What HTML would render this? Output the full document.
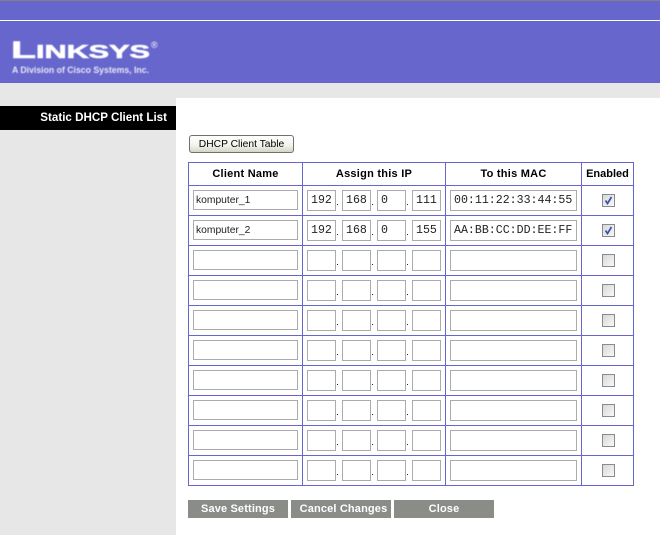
<!DOCTYPE html>
<html><head><meta charset="utf-8"><style>
html,body{margin:0;padding:0;width:660px;height:535px;overflow:hidden;background:#fff}
body{position:relative;font-family:"Liberation Sans",sans-serif;color:#000}
div,span{position:absolute;box-sizing:border-box}
.l{background:#6666cc}
.h{height:1px;left:188px;width:446px}
.v{width:1px;top:162px;height:324px}
.th{top:163px;height:23px;font-size:11px;font-weight:bold;text-align:center;line-height:23px;letter-spacing:.25px}
.row{left:0;width:660px;height:30px}
.i{border:1px solid #ababab;background:#fff;height:21px;top:5px;font-family:"Liberation Mono",monospace;font-size:11.6px;color:#222;line-height:20px;padding-left:3px;white-space:nowrap;overflow:hidden}
.n{left:193px;width:105px;height:20px;font-family:"Liberation Sans",sans-serif;font-size:10.3px;line-height:20px;padding-left:2px}
.a{left:307px;width:29px}.b{left:342px;width:29px}.c{left:377px;width:29px}.d{left:412px;width:29px}
.m{left:450px;width:127px}
.p{width:1px;height:1px;background:#222;top:19px}
.k{left:602px;top:9px;width:13px;height:13px;border:1px solid #868b92;background:linear-gradient(135deg,#d8d8d4,#f8f8f6)}
.k svg{position:absolute;left:1px;top:1px}
.bt{top:500px;width:100px;height:18px;background:#8a8c88;color:#fff;font-size:11px;font-weight:bold;text-align:center;line-height:18px;letter-spacing:.15px}
</style></head><body>
<div style="left:0;top:0;width:660px;height:83px;background:#6666cc"></div>
<div style="left:0;top:0;width:660px;height:1px;background:#808080"></div>
<div style="left:0;top:20px;width:660px;height:1px;background:#fff"></div>
<svg style="position:absolute;left:0;top:30px;filter:blur(.4px)" width="170" height="50">
<text x="11" y="28" fill="#fff" stroke="#fff" stroke-width=".6" font-family="Liberation Sans" font-weight="bold" font-size="18" textLength="139" lengthAdjust="spacingAndGlyphs"><tspan font-size="24">L</tspan>INKSYS</text>
<text x="151" y="18" fill="#fff" font-size="9" font-family="Liberation Sans">®</text>
<text x="12" y="43" fill="#e8e8f8" font-family="Liberation Sans" font-weight="bold" font-size="9" textLength="137" lengthAdjust="spacingAndGlyphs">A Division of Cisco Systems, Inc.</text>
</svg>
<div style="left:0;top:83px;width:660px;height:452px;background:#e7e7e7"></div>
<div style="left:176px;top:98px;width:484px;height:437px;background:#fff"></div>
<div style="left:0;top:106px;width:176px;height:24px;background:#000;color:#fff;font-size:11.6px;font-weight:bold;line-height:24px;text-align:right;padding-right:9px;white-space:nowrap">Static DHCP Client List</div>
<div style="left:189px;top:135px;width:105px;height:18px;border:1px solid #70706a;border-radius:3px;background:linear-gradient(#fff,#f2f2ec 60%,#d6d4c8);font-size:10.3px;line-height:17px;text-align:center">DHCP Client Table</div>

<div class="h l" style="top:162px"></div><div class="h l" style="top:185px"></div><div class="h l" style="top:215px"></div><div class="h l" style="top:245px"></div><div class="h l" style="top:275px"></div><div class="h l" style="top:305px"></div><div class="h l" style="top:335px"></div><div class="h l" style="top:365px"></div><div class="h l" style="top:395px"></div><div class="h l" style="top:425px"></div><div class="h l" style="top:455px"></div><div class="h l" style="top:485px"></div>
<div class="v l" style="left:188px"></div><div class="v l" style="left:302px"></div><div class="v l" style="left:445px"></div><div class="v l" style="left:581px"></div><div class="v l" style="left:633px"></div>
<div class="th" style="left:189px;width:113px">Client Name</div>
<div class="th" style="left:303px;width:142px">Assign this IP</div>
<div class="th" style="left:446px;width:135px">To this MAC</div>
<div class="th" style="left:582px;width:51px;letter-spacing:0">Enabled</div>

<div class="row" style="top:185px"><div class="i n">komputer_1</div><div class="i a">192</div><span class="p" style="left:337px"></span><div class="i b">168</div><span class="p" style="left:372px"></span><div class="i c">0</div><span class="p" style="left:407px"></span><div class="i d">111</div><div class="i m">00:11:22:33:44:55</div><div class="k"><svg width="11" height="11"><path d="M1.5 4.5L3.5 7.5L7.5 1" fill="none" stroke="#3a50b0" stroke-width="1.7"/></svg></div></div>
<div class="row" style="top:215px"><div class="i n">komputer_2</div><div class="i a">192</div><span class="p" style="left:337px"></span><div class="i b">168</div><span class="p" style="left:372px"></span><div class="i c">0</div><span class="p" style="left:407px"></span><div class="i d">155</div><div class="i m">AA:BB:CC:DD:EE:FF</div><div class="k"><svg width="11" height="11"><path d="M1.5 4.5L3.5 7.5L7.5 1" fill="none" stroke="#3a50b0" stroke-width="1.7"/></svg></div></div>
<div class="row" style="top:245px"><div class="i n"></div><div class="i a"></div><span class="p" style="left:337px"></span><div class="i b"></div><span class="p" style="left:372px"></span><div class="i c"></div><span class="p" style="left:407px"></span><div class="i d"></div><div class="i m"></div><div class="k"></div></div>
<div class="row" style="top:275px"><div class="i n"></div><div class="i a"></div><span class="p" style="left:337px"></span><div class="i b"></div><span class="p" style="left:372px"></span><div class="i c"></div><span class="p" style="left:407px"></span><div class="i d"></div><div class="i m"></div><div class="k"></div></div>
<div class="row" style="top:305px"><div class="i n"></div><div class="i a"></div><span class="p" style="left:337px"></span><div class="i b"></div><span class="p" style="left:372px"></span><div class="i c"></div><span class="p" style="left:407px"></span><div class="i d"></div><div class="i m"></div><div class="k"></div></div>
<div class="row" style="top:335px"><div class="i n"></div><div class="i a"></div><span class="p" style="left:337px"></span><div class="i b"></div><span class="p" style="left:372px"></span><div class="i c"></div><span class="p" style="left:407px"></span><div class="i d"></div><div class="i m"></div><div class="k"></div></div>
<div class="row" style="top:365px"><div class="i n"></div><div class="i a"></div><span class="p" style="left:337px"></span><div class="i b"></div><span class="p" style="left:372px"></span><div class="i c"></div><span class="p" style="left:407px"></span><div class="i d"></div><div class="i m"></div><div class="k"></div></div>
<div class="row" style="top:395px"><div class="i n"></div><div class="i a"></div><span class="p" style="left:337px"></span><div class="i b"></div><span class="p" style="left:372px"></span><div class="i c"></div><span class="p" style="left:407px"></span><div class="i d"></div><div class="i m"></div><div class="k"></div></div>
<div class="row" style="top:425px"><div class="i n"></div><div class="i a"></div><span class="p" style="left:337px"></span><div class="i b"></div><span class="p" style="left:372px"></span><div class="i c"></div><span class="p" style="left:407px"></span><div class="i d"></div><div class="i m"></div><div class="k"></div></div>
<div class="row" style="top:455px"><div class="i n"></div><div class="i a"></div><span class="p" style="left:337px"></span><div class="i b"></div><span class="p" style="left:372px"></span><div class="i c"></div><span class="p" style="left:407px"></span><div class="i d"></div><div class="i m"></div><div class="k"></div></div>

<div class="bt" style="left:188px">Save Settings</div>
<div class="bt" style="left:291px;padding-left:5px">Cancel Changes</div>
<div class="bt" style="left:394px">Close</div>
</body></html>
